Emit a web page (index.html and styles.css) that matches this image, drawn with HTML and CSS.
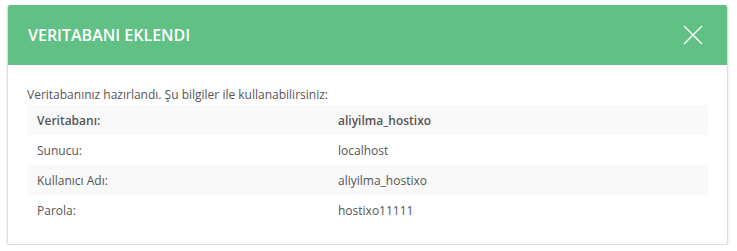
FILE: index.html
```html
<!DOCTYPE html>
<html lang="tr">
<head>
    <meta charset="UTF-8">
    <meta name="viewport" content="width=device-width, initial-scale=1.0">
    <title>Veritabanı Eklendi</title>
    <link rel="stylesheet" href="styles.css">
</head>
<body>
    <div class="modal">
        <div class="modal-header">
            <h2>VERITABANI EKLENDI</h2>
            <button class="close-modal" aria-label="Kapat">
                <svg width="20" height="20" viewBox="0 0 20 20">
                    <path d="M1 1 L19 19 M19 1 L1 19" stroke="#fff" stroke-width="1.4" fill="none"/>
                </svg>
            </button>
        </div>
        <div class="modal-body">
            <p class="intro">Veritabanınız hazırlandı. Şu bilgiler ile kullanabilirsiniz:</p>
            <div class="info-table">
                <div class="info-row head">
                    <span>Veritabanı:</span>
                    <span>aliyilma_hostixo</span>
                </div>
                <div class="info-row">
                    <span>Sunucu:</span>
                    <span>localhost</span>
                </div>
                <div class="info-row">
                    <span>Kullanıcı Adı:</span>
                    <span>aliyilma_hostixo</span>
                </div>
                <div class="info-row">
                    <span>Parola:</span>
                    <span>hostixo11111</span>
                </div>
            </div>
        </div>
    </div>
</body>
</html>
```

FILE: styles.css
```css
body {
    margin: 0;
    padding: 5px 9px 0 7px;
    background: #fff;
    font-family: "Open Sans", Arial, sans-serif;
    font-size: 12px;
    color: #555;
}
.modal {
    background: #fff;
    border: 1px solid #ddd;
    border-top: none;
    border-radius: 3px;
    box-shadow: 0 1px 3px rgba(0,0,0,0.12);
    overflow: hidden;
}
.modal-header {
    height: 60px;
    background-color: #61c184;
    display: flex;
    justify-content: space-between;
    align-items: center;
    padding: 0 24px 0 20px;
}
.modal-header h2 {
    margin: 0;
    color: #fff;
    font-size: 16px;
    font-weight: 600;
}
.close-modal {
    background: none;
    border: none;
    padding: 0;
    cursor: pointer;
    display: flex;
}
.modal-body {
    padding: 20px 19px 19px 19px;
}
.intro {
    margin: 0;
    line-height: 20px;
}
.info-row {
    display: grid;
    grid-template-columns: 301px 1fr;
    height: 30px;
    align-items: center;
}
.info-row:nth-child(odd) {
    background: #f9f9f9;
}
.info-row span {
    padding-left: 10px;
}
.info-row.head {
    font-weight: 600;
}
```
